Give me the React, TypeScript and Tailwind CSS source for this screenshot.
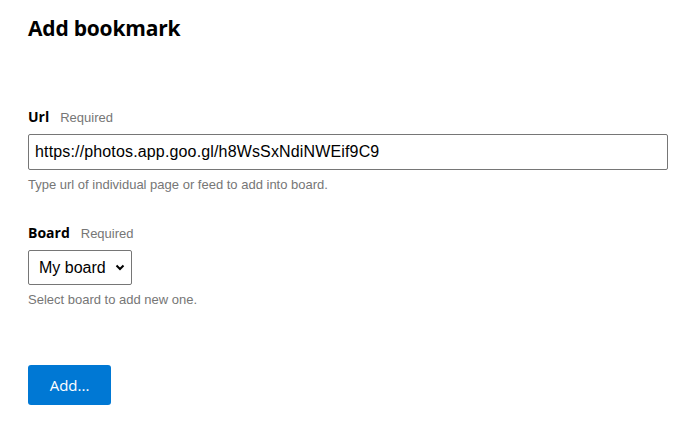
import React from "react";

export default function App() {
  return (
    <div className="w-[700px] h-[423px] bg-white overflow-hidden pl-[28px] pr-[32px]">
      <h1 className="pt-[14px] text-[21px] leading-[28px] font-bold text-black font-['Open_Sans',sans-serif] tracking-[-0.2px]">
        Add bookmark
      </h1>
      <div className="mt-[66px] flex items-baseline gap-[11px]">
        <span className="text-[14px] leading-[18px] font-bold text-black font-['Open_Sans',sans-serif]">Url</span>
        <span className="text-[13px] leading-[18px] text-[#767676] font-['Liberation_Sans',sans-serif]">Required</span>
      </div>
      <input
        readOnly
        value="https://photos.app.goo.gl/h8WsSxNdiNWEif9C9"
        className="mt-[7px] block w-[640px] h-[36px] border border-[#767676] rounded-[2px] px-[6px] text-[16px] tracking-[0.15px] text-black font-['Liberation_Sans',sans-serif] outline-none"
      />
      <p className="mt-[7px] text-[13px] leading-[16px] text-[#767676] font-['Liberation_Sans',sans-serif]">
        Type url of individual page or feed to add into board.
      </p>
      <div className="mt-[31px] flex items-baseline gap-[11px]">
        <span className="text-[14px] leading-[18px] font-bold text-black font-['Open_Sans',sans-serif]">Board</span>
        <span className="text-[13px] leading-[18px] text-[#767676] font-['Liberation_Sans',sans-serif]">Required</span>
      </div>
      <div className="mt-[7px] relative w-[104px] h-[35px] border border-[#767676] rounded-[2px] flex items-center pl-[10px]">
        <span className="text-[16px] text-black font-['Liberation_Sans',sans-serif]">My board</span>
        <svg className="absolute right-[6px] top-[13px]" width="10" height="7" viewBox="0 0 10 7">
          <path d="M1.5 1.5 L5 5 L8.5 1.5" fill="none" stroke="black" strokeWidth="2" />
        </svg>
      </div>
      <p className="mt-[7px] text-[13px] leading-[16px] text-[#767676] font-['Liberation_Sans',sans-serif]">
        Select board to add new one.
      </p>
      <button className="mt-[57px] w-[83px] h-[40px] rounded-[3px] bg-[#0078d4] text-white text-[15px] font-['Open_Sans',sans-serif]">
        Add...
      </button>
    </div>
  );
}
